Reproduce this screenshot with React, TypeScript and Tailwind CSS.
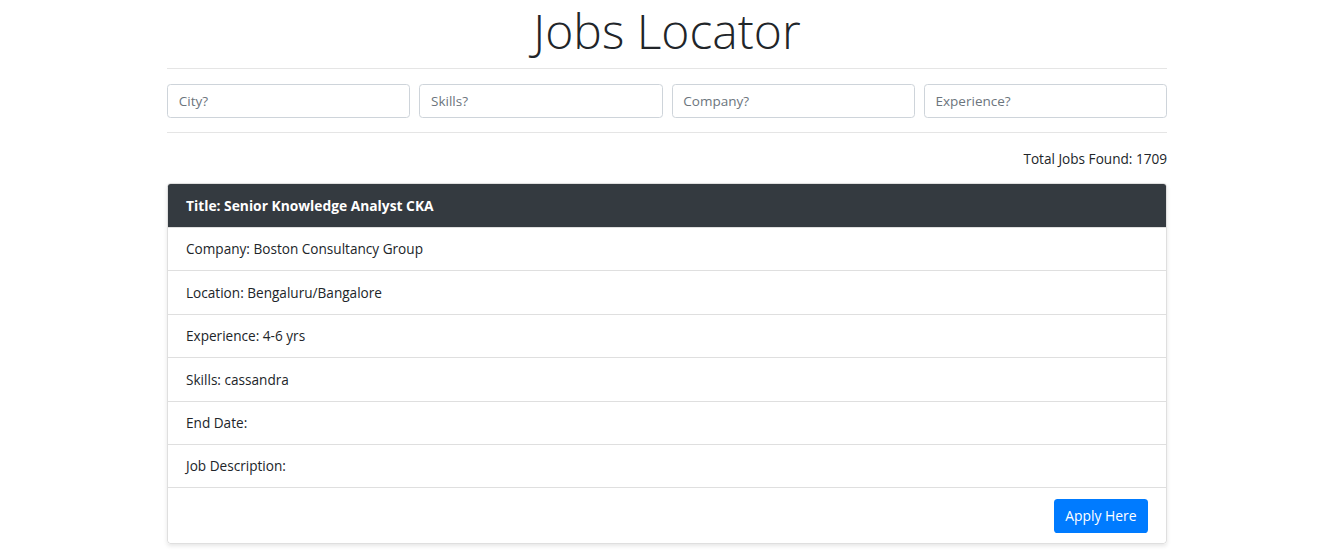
const rows = [
  "Company: Boston Consultancy Group",
  "Location: Bengaluru/Bangalore",
  "Experience: 4-6 yrs",
  "Skills: cassandra",
  "End Date:",
  "Job Description:",
];

const filters = ["City?", "Skills?", "Company?", "Experience?"];

export default function App() {
  return (
    <div className="min-h-screen bg-white font-['Open_Sans',sans-serif] text-[13.6px] leading-[21.6px] text-[#212529]">
      <div className="mx-auto w-[1000px] -translate-x-px">
        <h1 className="h-[68px] pt-[1px] text-center text-[48px] font-light leading-[60px]">Jobs Locator</h1>
        <hr className="border-t border-[rgba(0,0,0,0.1)]" />
        <div className="mt-[15px] grid grid-cols-4 gap-[9px]">
          {filters.map((f) => (
            <input
              key={f}
              placeholder={f}
              className="h-[34px] rounded-[3.6px] border border-[#ced4da] bg-white px-[10.8px] text-[13.5px] text-[#495057] outline-none placeholder:text-[#6c757d]"
            />
          ))}
        </div>
        <hr className="mt-[14px] border-t border-[rgba(0,0,0,0.1)]" />
        <p className="mt-[15px] h-[21.6px] text-right">Total Jobs Found: 1709</p>
        <div className="mt-[13.4px] rounded-[3.6px] border border-[rgba(0,0,0,0.125)] shadow-[0_2px_4px_rgba(0,0,0,0.1)]">
          <div className="flex h-[43px] items-center rounded-t-[2.6px] bg-[#343a40] px-[18px] text-[13.8px] font-bold text-white">
            Title: Senior Knowledge Analyst CKA
          </div>
          {rows.map((r) => (
            <div key={r} className="flex h-[43.4px] items-center border-t border-[rgba(0,0,0,0.125)] px-[18px]">
              {r}
            </div>
          ))}
          <div className="flex h-[56px] items-center justify-end border-t border-[rgba(0,0,0,0.125)] px-[18px]">
            <button className="h-[34px] rounded-[3.6px] bg-[#007bff] px-[11.5px] text-[13.9px] text-white">
              Apply Here
            </button>
          </div>
        </div>
      </div>
    </div>
  );
}
